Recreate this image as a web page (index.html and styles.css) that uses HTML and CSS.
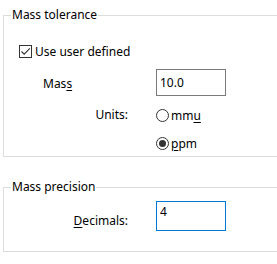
FILE: index.html
```html
<!DOCTYPE html>
<html lang="en">
<head>
    <meta charset="UTF-8">
    <title>Mass settings</title>
    <link rel="stylesheet" href="styles.css">
</head>
<body>

    <fieldset class="group tolerance">
        <legend>Mass tolerance</legend>

        <label class="check-row">
            <span class="checkbox">
                <svg width="11" height="11" viewBox="0 0 11 11">
                    <path d="M1.5 5.5 L4.2 8.2 L9.8 2.4" fill="none" stroke="#333" stroke-width="1.1"/>
                </svg>
            </span>
            <span>Use user def<u>i</u>ned</span>
        </label>

        <div class="field-row mass-row">
            <span class="label left">Mas<u>s</u></span>
            <input class="edit" type="text" value="10.0">
        </div>

        <div class="field-row units-row">
            <span class="label units">Units:</span>
            <div class="radios">
                <label class="radio-row"><span class="radio"></span><span>mm<u>u</u></span></label>
                <label class="radio-row"><span class="radio checked"></span><span><u>p</u>pm</span></label>
            </div>
        </div>
    </fieldset>

    <fieldset class="group precision">
        <legend>Mass precision</legend>

        <div class="field-row decimals-row">
            <span class="label decimals"><u>D</u>ecimals:</span>
            <input class="edit focused" type="text" value="4">
        </div>
    </fieldset>

</body>
</html>
```

FILE: styles.css
```css
body {
    margin: 0;
    padding: 0;
    background-color: #ffffff;
    font-family: "Noto Sans", "Liberation Sans", sans-serif;
    font-size: 12px;
    color: #000;
    overflow: hidden;
    width: 277px;
    height: 264px;
}

u {
    text-decoration-thickness: 1px;
    text-underline-offset: 2px;
}

/* groups are cut off by the window on the right */
.group {
    width: 274px;
    margin: 0 0 0 3px;
    padding: 0;
    border: 1px solid #dcdcdc;
    border-right: 0;
    box-sizing: border-box;
    min-width: 0;
}

.group legend {
    margin-left: 7px;
    padding: 0 1px;
    line-height: 16px;
}

.tolerance {
    margin-top: 7px;
    padding-bottom: 1px;
}

.precision {
    margin-top: 22px;
    padding-bottom: 20px;
}

.check-row {
    display: flex;
    align-items: center;
    height: 13px;
    line-height: 13px;
    margin: 22px 0 0 15px;
    gap: 3px;
}

.checkbox {
    width: 11px;
    height: 11px;
    border: 1px solid #333;
    display: flex;
    align-items: center;
    justify-content: center;
}

.field-row {
    display: flex;
}

.label {
    width: 152px;
    flex-shrink: 0;
    box-sizing: border-box;
}

.left {
    padding-left: 39px;
    align-self: center;
    padding-top: 2px;
}

.units {
    text-align: right;
    padding-right: 28px;
    line-height: 24px;
}

.decimals {
    text-align: right;
    padding-right: 28px;
    padding-top: 11px;
}

.mass-row {
    margin-top: 11px;
}

.units-row {
    margin-top: 7px;
}

.decimals-row {
    margin-top: 6px;
}

.edit {
    width: 70px;
    height: 27px;
    box-sizing: border-box;
    border: 1px solid #7a7a7a;
    padding: 0 3px;
    font-family: inherit;
    font-size: 12px;
    color: #000;
    outline: none;
}

.edit.focused {
    height: 30px;
    border-color: #0078d7;
    padding-bottom: 9px;
}

.radios {
    display: flex;
    flex-direction: column;
    gap: 4px;
}

.radio-row {
    display: flex;
    align-items: center;
    height: 24px;
    gap: 2px;
}

.radio {
    width: 11px;
    height: 11px;
    border: 1px solid #333;
    border-radius: 50%;
    display: flex;
    align-items: center;
    justify-content: center;
}

.radio.checked::after {
    content: '';
    width: 7px;
    height: 7px;
    border-radius: 50%;
    background: #333;
}
```
